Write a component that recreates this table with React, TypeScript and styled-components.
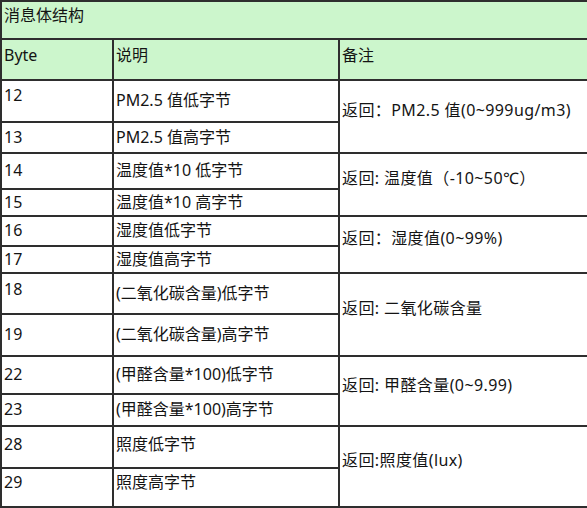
import styled, { createGlobalStyle } from "styled-components";

const GlobalStyle = createGlobalStyle`
  body {
    margin: 0;
    background: #ffffff;
    font-family: "Noto Sans", "Noto Sans CJK SC", sans-serif;
  }
`;

type Row = {
  byte: string;
  desc: string;
  h: number;
  byteTop?: number;
  descTop?: number;
  note?: { text: string; span: number };
};

const rows: Row[] = [
  { byte: "12", desc: "PM2.5 值低字节", h: 42, byteTop: 4, note: { text: "返回：PM2.5 值(0~999ug/m3)", span: 2 } },
  { byte: "13", desc: "PM2.5 值高字节", h: 31 },
  { byte: "14", desc: "温度值*10 低字节", h: 36, note: { text: "返回: 温度值（-10~50℃）", span: 2 } },
  { byte: "15", desc: "温度值*10 高字节", h: 27 },
  { byte: "16", desc: "湿度值低字节", h: 30, note: { text: "返回：湿度值(0~99%)", span: 2 } },
  { byte: "17", desc: "湿度值高字节", h: 27 },
  { byte: "18", desc: "(二氧化碳含量)低字节", h: 41, byteTop: 5, note: { text: "返回: 二氧化碳含量", span: 2 } },
  { byte: "19", desc: "(二氧化碳含量)高字节", h: 42 },
  { byte: "22", desc: "(甲醛含量*100)低字节", h: 38, note: { text: "返回: 甲醛含量(0~9.99)", span: 2 } },
  { byte: "23", desc: "(甲醛含量*100)高字节", h: 32 },
  { byte: "28", desc: "照度低字节", h: 42, byteTop: 7, descTop: 7, note: { text: "返回:照度值(lux)", span: 2 } },
  { byte: "29", desc: "照度高字节", h: 39, byteTop: 3, descTop: 3 },
];

const App = () => {
  return (
    <>
      <GlobalStyle />
      <Table>
        <colgroup>
          <col style={{ width: 112 }} />
          <col style={{ width: 226 }} />
          <col style={{ width: 249 }} />
        </colgroup>
        <tbody>
          <TableRow $h={38}>
            <HeadCell colSpan={3} $top={3}>消息体结构</HeadCell>
          </TableRow>
          <TableRow $h={41}>
            <HeadCell $top={5}>Byte</HeadCell>
            <HeadCell $top={5}>说明</HeadCell>
            <HeadCell $top={5}>备注</HeadCell>
          </TableRow>
          {rows.map((r) => (
            <TableRow key={r.byte} $h={r.h}>
              <Cell $top={r.byteTop}>{r.byte}</Cell>
              <Cell $top={r.descTop}>{r.desc}</Cell>
              {r.note && <NoteCell rowSpan={r.note.span}>{r.note.text}</NoteCell>}
            </TableRow>
          ))}
        </tbody>
      </Table>
    </>
  );
};

export default App;

const Table = styled.table`
  width: 587px;
  border-collapse: collapse;
  table-layout: fixed;
  font-size: 16px;
  line-height: 20px;
  color: #141414;
`;

const TableRow = styled.tr<{ $h: number }>`
  height: ${({ $h }) => $h}px;
`;

const Cell = styled.td<{ $top?: number }>`
  border: 2px solid #2e2e2e;
  padding: 0 2px;
  padding-top: ${({ $top }) => ($top !== undefined ? `${$top}px` : "0")};
  padding-bottom: ${({ $top }) => ($top !== undefined ? "0" : "2px")};
  vertical-align: ${({ $top }) => ($top !== undefined ? "top" : "middle")};
  white-space: nowrap;
`;

const HeadCell = styled(Cell)`
  background: #ccf6cc;
`;

const NoteCell = styled.td`
  border: 2px solid #2e2e2e;
  padding: 0 2px 13px;
  vertical-align: middle;
  white-space: nowrap;
  letter-spacing: 0.4px;
`;
